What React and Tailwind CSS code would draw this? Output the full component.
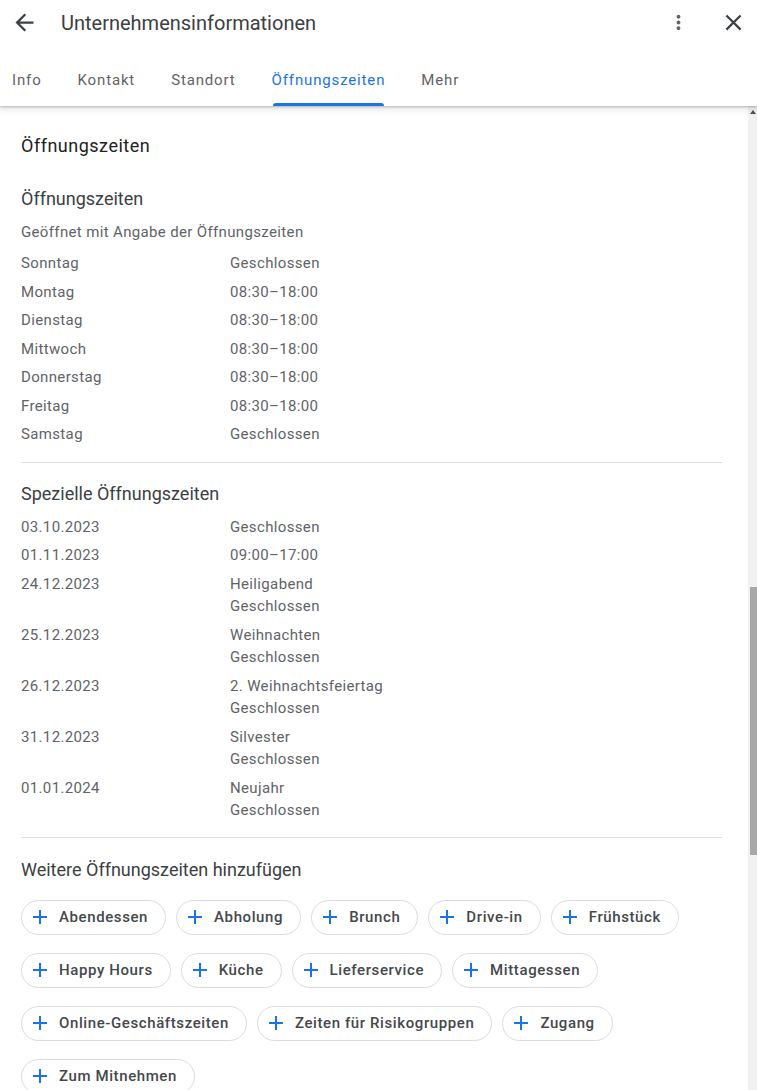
import React from "react";

const days = [
  ["Sonntag", "Geschlossen"],
  ["Montag", "08:30–18:00"],
  ["Dienstag", "08:30–18:00"],
  ["Mittwoch", "08:30–18:00"],
  ["Donnerstag", "08:30–18:00"],
  ["Freitag", "08:30–18:00"],
  ["Samstag", "Geschlossen"],
];

const special = [
  ["03.10.2023", ["Geschlossen"]],
  ["01.11.2023", ["09:00–17:00"]],
  ["24.12.2023", ["Heiligabend", "Geschlossen"]],
  ["25.12.2023", ["Weihnachten", "Geschlossen"]],
  ["26.12.2023", ["2. Weihnachtsfeiertag", "Geschlossen"]],
  ["31.12.2023", ["Silvester", "Geschlossen"]],
  ["01.01.2024", ["Neujahr", "Geschlossen"]],
];

const chipRows = [
  ["Abendessen", "Abholung", "Brunch", "Drive-in", "Frühstück"],
  ["Happy Hours", "Küche", "Lieferservice", "Mittagessen"],
  ["Online-Geschäftszeiten", "Zeiten für Risikogruppen", "Zugang"],
  ["Zum Mitnehmen"],
];

const tabs = ["Info", "Kontakt", "Standort", "Öffnungszeiten", "Mehr"];

const Icon = ({ d, className }) => (
  <svg viewBox="0 0 24 24" className={className} fill="currentColor">
    <path d={d} />
  </svg>
);

const Chip = ({ label }) => (
  <button className="h-[35px] flex items-center gap-[11px] pl-[10px] pr-[17px] rounded-full border border-[#dadce0] bg-white text-[15px] font-medium tracking-[0.6px] text-[#45484c]">
    <Icon d="M19 13h-6v6h-2v-6H5v-2h6V5h2v6h6v2z" className="w-[24px] h-[24px] -mx-[4px] text-[#1a73e8]" />
    <span>{label}</span>
  </button>
);

const Row = ({ left, right }) => (
  <div className="flex py-[3px] leading-[22.5px]">
    <div className="w-[209px]">{left}</div>
    <div className="flex flex-col">
      {right.map((r) => (
        <span key={r}>{r}</span>
      ))}
    </div>
  </div>
);

const App = () => {
  return (
    <div className="h-[1090px] w-[757px] overflow-hidden flex flex-col bg-white font-['Roboto',sans-serif]">
      {/* header */}
      <header className="relative z-10 bg-white shadow-[0_1px_2px_rgba(60,64,67,0.3),0_2px_6px_2px_rgba(60,64,67,0.12)]">
        <div className="h-[45px] flex items-center text-[#3c4043]">
          <Icon d="M20 11H7.83l5.59-5.59L12 4l-8 8 8 8 1.41-1.41L7.83 13H20v-2z" className="w-[27px] h-[27px] ml-[11px] text-[#3c4043]" />
          <h1 className="ml-[23px] text-[20px] text-[#3c4043]">Unternehmensinformationen</h1>
          <Icon
            d="M12 8c1.1 0 2-.9 2-2s-.9-2-2-2-2 .9-2 2 .9 2 2 2zm0 2c-1.1 0-2 .9-2 2s.9 2 2 2 2-.9 2-2-.9-2-2-2zm0 6c-1.1 0-2 .9-2 2s.9 2 2 2 2-.9 2-2-.9-2-2-2z"
            className="w-[23px] h-[23px] ml-auto text-[#5f6368]"
          />
          <Icon
            d="M19 6.41L17.59 5 12 10.59 6.41 5 5 6.41 10.59 12 5 17.59 6.41 19 12 13.41 17.59 19 19 17.59 13.41 12z"
            className="w-[27px] h-[27px] ml-[30px] mr-[10px] text-[#3c4043]"
          />
        </div>
        <nav className="h-[61px] flex gap-[36px] pl-[12px]">
          {tabs.map((t) => (
            <div
              key={t}
              className={
                t === "Öffnungszeiten"
                  ? "flex flex-col justify-end text-[15px] tracking-[0.85px] text-[#1a73e8]"
                  : "flex flex-col justify-end text-[15px] tracking-[0.85px] text-[#5f6368]"
              }
            >
              <span className="pb-[12px]">{t}</span>
              <div
                className={
                  t === "Öffnungszeiten"
                    ? "h-[3px] mx-[1px] rounded-t-[3px] bg-[#1a73e8]"
                    : "h-[3px]"
                }
              />
            </div>
          ))}
        </nav>
      </header>

      {/* body */}
      <div className="flex flex-1 min-h-0">
        <main className="flex-1 pl-[21px] pr-[26px] text-[15px] tracking-[0.35px] text-[#5f6368]">
          <h2 className="mt-[28px] text-[18px] tracking-[0.5px] text-[#202124] leading-[24px]">Öffnungszeiten</h2>

          <h3 className="mt-[29px] text-[18px] tracking-normal text-[#3c4043] leading-[24px]">Öffnungszeiten</h3>
          <p className="mt-[10px] leading-[22px]">Geöffnet mit Angabe der Öffnungszeiten</p>
          <div className="mt-[6px]">
            {days.map(([d, h]) => (
              <div key={d} className="flex h-[28.5px] items-center">
                <div className="w-[209px]">{d}</div>
                <div>{h}</div>
              </div>
            ))}
          </div>

          <div className="mt-[13px] border-t border-[#dadce0]" />

          <h3 className="mt-[19px] text-[18px] tracking-normal text-[#3c4043] leading-[24px]">Spezielle Öffnungszeiten</h3>
          <div className="mt-[7px]">
            {special.map(([d, r]) => (
              <Row key={d} left={d} right={r} />
            ))}
          </div>

          <div className="mt-[12px] border-t border-[#dadce0]" />

          <h3 className="mt-[20px] text-[18px] tracking-normal text-[#3c4043] leading-[24px]">Weitere Öffnungszeiten hinzufügen</h3>
          <div className="mt-[18px] flex flex-col gap-[18px]">
            {chipRows.map((row, i) => (
              <div key={i} className="flex gap-[10px]">
                {row.map((c) => (
                  <Chip key={c} label={c} />
                ))}
              </div>
            ))}
          </div>
        </main>

        {/* scrollbar */}
        <div className="w-[9px] bg-[#f1f1f1] flex flex-col items-end">
          <div className="mt-[4px] mr-[1px] w-0 h-0 border-l-[3px] border-r-[3px] border-b-[4px] border-l-transparent border-r-transparent border-b-[#505050]" />
          <div className="mt-[473px] w-[7px] h-[268px] bg-[#a8a8a8]" />
        </div>
      </div>
    </div>
  );
};

export default App;
